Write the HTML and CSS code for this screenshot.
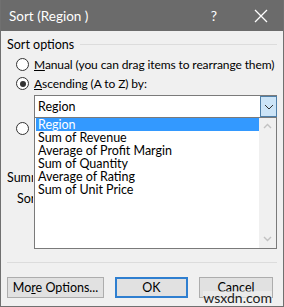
FILE: index.html
```html
<!DOCTYPE html>
<html lang="en">
<head>
    <meta charset="UTF-8">
    <meta name="viewport" content="width=device-width, initial-scale=1.0">
    <title>Sort (Region )</title>
    <link rel="stylesheet" href="styles.css">
</head>
<body>
    <div class="window">
        <div class="titlebar">
            <span class="title">Sort (Region )</span>
            <span class="help">?</span>
            <svg class="close" width="14" height="14" viewBox="0 0 14 14">
                <path d="M1 1 L13 13 M13 1 L1 13" stroke="#fff" stroke-width="1.3" fill="none"/>
            </svg>
        </div>

        <div class="content">
            <!-- Sort options group -->
            <div class="group-head">
                <span>Sort options</span>
                <span class="rule"></span>
            </div>
            <div class="radio-row row-manual">
                <span class="radio"></span>
                <span><u>M</u>anual (you can drag items to rearrange them)</span>
            </div>
            <div class="radio-row row-asc">
                <span class="radio checked"></span>
                <span><u>A</u>scending (A to Z) by:</span>
            </div>
            <div class="combo">
                <span class="combo-text">Region</span>
                <span class="combo-btn">
                    <svg width="10" height="6" viewBox="0 0 10 6">
                        <path d="M1 1 L5 5 L9 1" stroke="#333" stroke-width="1" fill="none"/>
                    </svg>
                </span>
            </div>
            <div class="radio-row row-desc">
                <span class="radio"></span>
            </div>

            <!-- Summary group, mostly hidden under the open list -->
            <div class="clip summary-head">Summary</div>
            <div class="clip summary-text">Sort Region</div>

            <div class="separator"></div>

            <div class="buttons">
                <button class="btn btn-more">Mo<u>r</u>e Options...</button>
                <button class="btn btn-ok">OK</button>
                <button class="btn btn-cancel">Cancel</button>
            </div>
        </div>

        <!-- Open drop-down list of the combo box -->
        <div class="listbox">
            <ul class="items">
                <li class="selected">Region</li>
                <li>Sum of Revenue</li>
                <li>Average of Profit Margin</li>
                <li>Sum of Quantity</li>
                <li>Average of Rating</li>
                <li>Sum of Unit Price</li>
            </ul>
            <div class="scrollbar">
                <svg width="9" height="6" viewBox="0 0 9 6">
                    <path d="M1 5 L4.5 1.5 L8 5" stroke="#c2c2c2" stroke-width="1.4" fill="none"/>
                </svg>
                <svg width="9" height="6" viewBox="0 0 9 6">
                    <path d="M1 1 L4.5 4.5 L8 1" stroke="#c2c2c2" stroke-width="1.4" fill="none"/>
                </svg>
            </div>
        </div>

        <span class="watermark">wsxdn.com</span>
    </div>
</body>
</html>
```

FILE: styles.css
```css
body {
    margin: 0;
    padding: 0;
    font-family: "Lato", "Noto Sans", sans-serif;
    font-size: 12px;
    color: #000;
}
.window {
    position: relative;
    width: 284px;
    height: 307px;
    box-sizing: border-box;
    background-color: #f0f0f0;
    border: 1px solid #707070;
    border-top: none;
    overflow: hidden;
    white-space: nowrap;
}
.titlebar {
    display: flex;
    align-items: center;
    height: 31px;
    background-color: #6b6b6b;
    color: #fff;
    margin: 0 -1px;
    padding-left: 9px;
}
.title {
    font-size: 13.5px;
    flex: 1;
}
.help {
    font-size: 14px;
    margin-right: 37px;
}
.close {
    margin-right: 16px;
}
.content {
    padding: 0 6px;
}
.group-head {
    display: flex;
    align-items: center;
    height: 16px;
    margin-top: 5px;
    font-size: 12.5px;
}
.rule {
    flex: 1;
    height: 1px;
    background-color: #dcdcdc;
    margin-left: 6px;
}
.radio-row {
    display: flex;
    align-items: center;
    height: 19px;
    padding-left: 9px;
    letter-spacing: -0.1px;
}
.row-manual {
    margin-top: 3px;
}
.radio {
    width: 11px;
    height: 11px;
    border: 1px solid #333;
    border-radius: 50%;
    background-color: #fff;
    margin-right: 5px;
    position: relative;
    flex-shrink: 0;
}
.radio.checked::after {
    content: "";
    position: absolute;
    left: 2.5px;
    top: 2.5px;
    width: 6px;
    height: 6px;
    border-radius: 50%;
    background-color: #333;
}
.combo {
    display: flex;
    align-items: center;
    height: 21px;
    margin: 2px 0 0 27px;
    width: 241px;
    border: 1px solid #7a7a7a;
    background-color: #fff;
    font-size: 12.5px;
}
.combo-text {
    flex: 1;
    padding-left: 3px;
}
.combo-btn {
    display: flex;
    align-items: center;
    justify-content: center;
    width: 15px;
    height: 19px;
    background-color: #cce4f7;
    border: 1px solid #4f7fa8;
    margin-right: -1px;
}
.row-desc {
    margin-top: 1px;
}
.clip {
    overflow: hidden;
    height: 16px;
    line-height: 16px;
    font-size: 12.5px;
}
.summary-head {
    margin-top: 32px;
    width: 26px;
}
.summary-text {
    margin-top: 5px;
    padding-left: 10px;
    width: 16px;
}
.separator {
    height: 1px;
    background-color: #dcdcdc;
    margin-top: 55px;
}
.buttons {
    display: flex;
    gap: 11px;
    margin-top: 14px;
}
.btn {
    font-family: inherit;
    font-size: 12.5px;
    height: 21px;
    padding: 0;
    background-color: #e1e1e1;
    border: 1px solid #adadad;
    color: #000;
}
.btn-more {
    width: 97px;
}
.btn-ok {
    width: 73px;
    border: 2px solid #2f7fd0;
}
.btn-cancel {
    width: 74px;
}
.listbox {
    position: absolute;
    left: 33px;
    top: 117px;
    width: 243px;
    height: 132px;
    box-sizing: border-box;
    border: 1px solid #7a7a7a;
    background-color: #fff;
    display: flex;
    font-size: 12.5px;
}
.items {
    list-style: none;
    margin: 0;
    padding: 0 0 0 1px;
    flex: 1;
}
.items li {
    height: 13px;
    line-height: 13px;
    padding-left: 2px;
}
.items li.selected {
    background-color: #3399ff;
    color: #fff;
}
.scrollbar {
    width: 17px;
    background-color: #f0f0f0;
    display: flex;
    flex-direction: column;
    justify-content: space-between;
    align-items: center;
    padding: 5px 0 6px;
}
.watermark {
    position: absolute;
    right: 11px;
    bottom: 1px;
    font-size: 14px;
    color: #222;
    background-color: rgba(240, 240, 240, 0.6);
    line-height: 14px;
}
```
